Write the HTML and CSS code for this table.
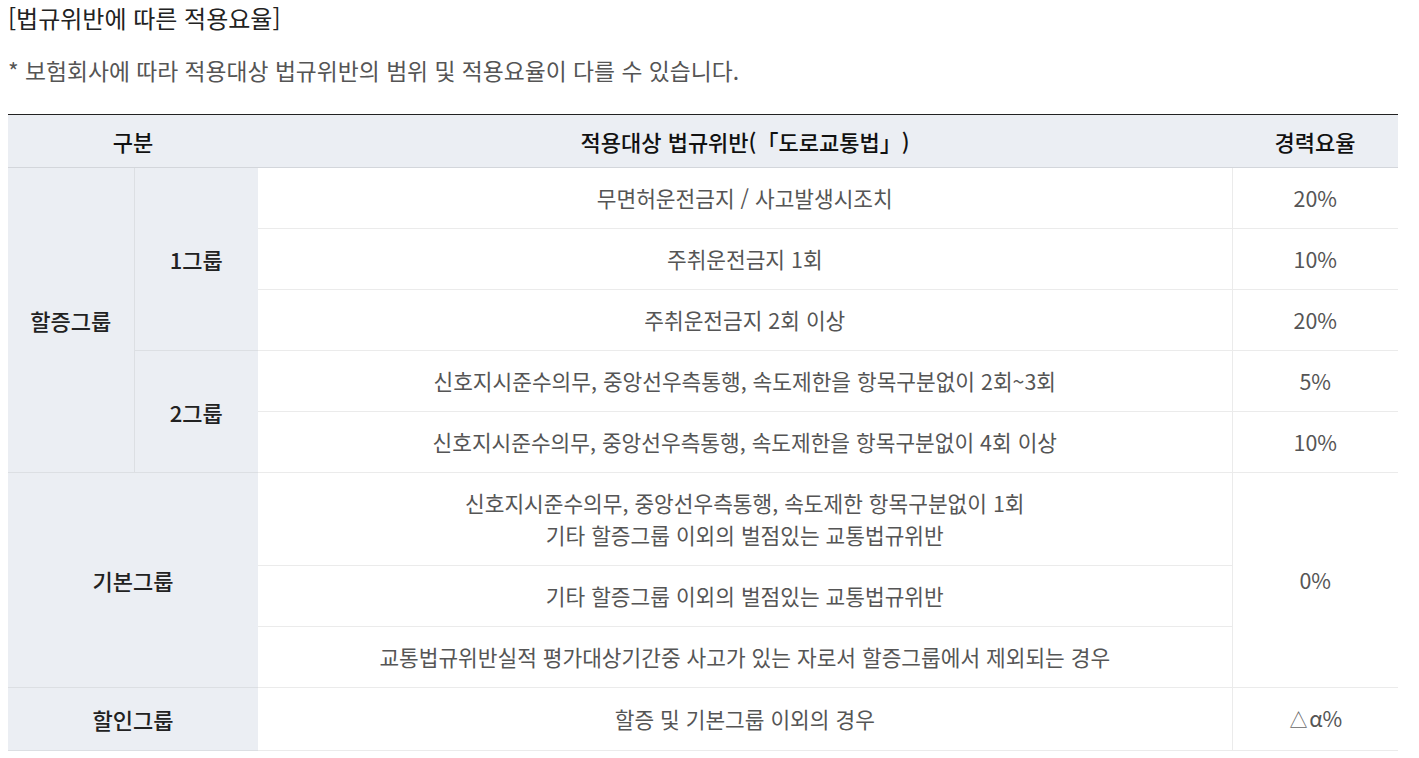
FILE: index.html
```html
<!DOCTYPE html>
<html lang="ko">
<head>
<meta charset="utf-8">
<title>법규위반에 따른 적용요율</title>
<link rel="stylesheet" href="styles.css">
</head>
<body>
<h2 class="title">[법규위반에 따른 적용요율]</h2>
<p class="note">* 보험회사에 따라 적용대상 법규위반의 범위 및 적용요율이 다를 수 있습니다.</p>
<table class="rate-table">
  <colgroup>
    <col class="c1"><col class="c2"><col class="c3"><col class="c4">
  </colgroup>
  <thead>
    <tr>
      <th colspan="2">구분</th>
      <th>적용대상 법규위반(<span class="fw">「</span>도로교통법<span class="fw">」</span>)</th>
      <th>경력요율</th>
    </tr>
  </thead>
  <tbody>
    <tr>
      <th class="side" rowspan="5">할증그룹</th>
      <th class="side sub" rowspan="3">1그룹</th>
      <td>무면허운전금지 / 사고발생시조치</td>
      <td class="rate">20%</td>
    </tr>
    <tr>
      <td>주취운전금지 1회</td>
      <td class="rate">10%</td>
    </tr>
    <tr>
      <td>주취운전금지 2회 이상</td>
      <td class="rate">20%</td>
    </tr>
    <tr>
      <th class="side sub" rowspan="2">2그룹</th>
      <td>신호지시준수의무, 중앙선우측통행, 속도제한을 항목구분없이 2회~3회</td>
      <td class="rate">5%</td>
    </tr>
    <tr>
      <td>신호지시준수의무, 중앙선우측통행, 속도제한을 항목구분없이 4회 이상</td>
      <td class="rate">10%</td>
    </tr>
    <tr>
      <th class="side" colspan="2" rowspan="3">기본그룹</th>
      <td>신호지시준수의무, 중앙선우측통행, 속도제한 항목구분없이 1회<br>기타 할증그룹 이외의 벌점있는 교통법규위반</td>
      <td class="rate" rowspan="3">0%</td>
    </tr>
    <tr>
      <td>기타 할증그룹 이외의 벌점있는 교통법규위반</td>
    </tr>
    <tr>
      <td>교통법규위반실적 평가대상기간중 사고가 있는 자로서 할증그룹에서 제외되는 경우</td>
    </tr>
    <tr>
      <th class="side" colspan="2">할인그룹</th>
      <td>할증 및 기본그룹 이외의 경우</td>
      <td class="rate"><span class="tri">△</span>α%</td>
    </tr>
  </tbody>
</table>
</body>
</html>
```

FILE: styles.css
```css
html, body {
  background: #ffffff;
}
body {
  margin: 0 8px;
  font-family: "Noto Sans CJK KR", "Noto Sans", sans-serif;
  color: #222;
}
.title {
  margin: 0;
  font-size: 24px;
  line-height: 36px;
  font-weight: 400;
  color: #222;
}
.note {
  margin: 18px 0 0;
  font-size: 22.8px;
  line-height: 34px;
  color: #555;
}
.rate-table {
  margin-top: 26px;
  width: 1390px;
  border-collapse: collapse;
  table-layout: fixed;
  border-top: 1px solid #222;
  border-bottom: 1px solid #dcdfe3;
}
.c1 { width: 126px; }
.c2 { width: 124px; }
.c3 { width: 974px; }
.c4 { width: 166px; }
.rate-table thead th {
  background: #ebeef3;
  font-size: 22px;
  line-height: 32px;
  font-weight: 500;
  color: #111;
  padding: 10px 0;
  border-bottom: 1px solid #d3d6db;
  text-align: center;
  text-spacing-trim: space-all;
}
.fw {
  font-family: "Noto Sans CJK JP", sans-serif;
  text-spacing-trim: space-all;
  font-feature-settings: "fwid" 1;
}
.rate-table td {
  font-size: 21.4px;
  line-height: 32px;
  color: #555;
  text-align: center;
  padding: 14px 0;
  border-bottom: 1px solid #ebebeb;
}
.rate-table td.rate {
  border-left: 1px solid #ebebeb;
}
.tri {
  font-family: "DejaVu Sans", sans-serif;
  font-weight: 200;
  color: #666;
}
.rate-table .side {
  background: #ebeef3;
  font-size: 22px;
  line-height: 32px;
  font-weight: 500;
  color: #222;
  text-align: center;
  padding: 14px 0;
  border-bottom: 1px solid #dcdfe3;
}
.rate-table .sub {
  border-left: 1px solid #dcdfe3;
}
```
